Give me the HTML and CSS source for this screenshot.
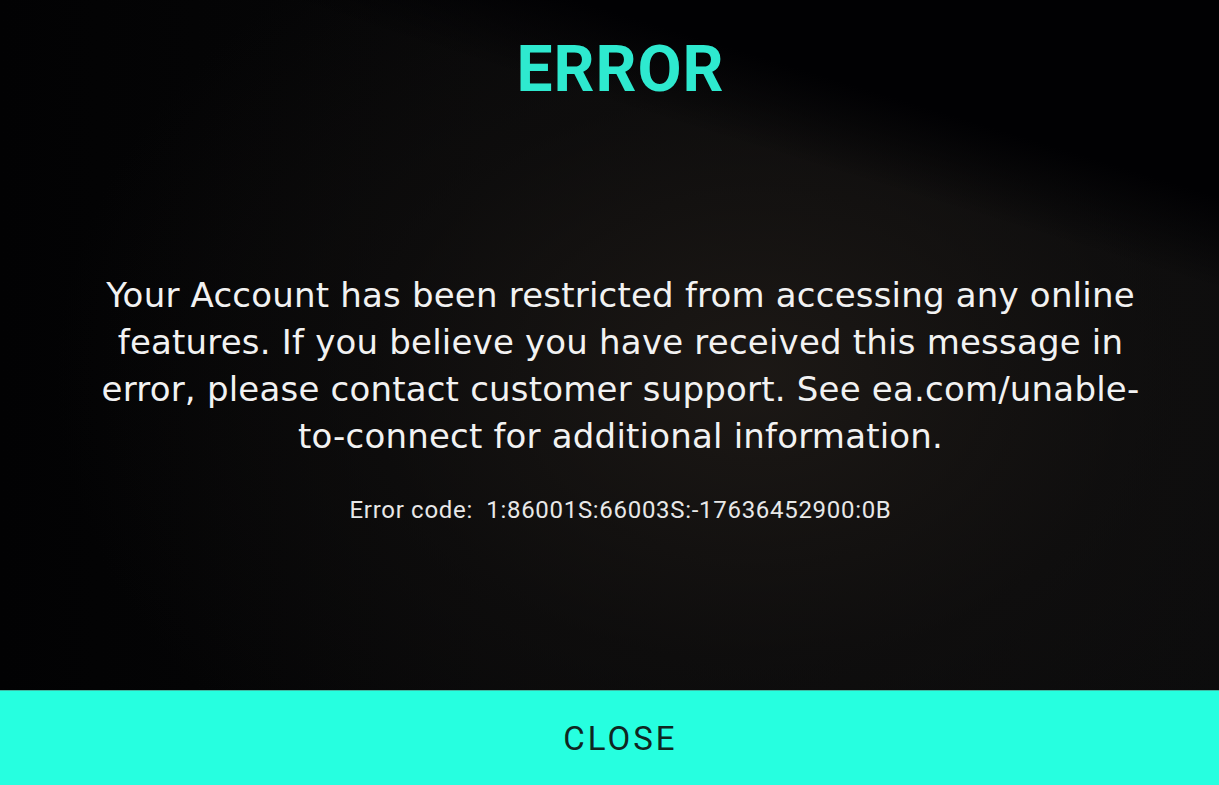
FILE: index.html
```html
<!DOCTYPE html>
<html lang="en">
<head>
    <meta charset="UTF-8">
    <meta name="viewport" content="width=device-width, initial-scale=1.0">
    <title>Error</title>
    <link rel="stylesheet" href="styles.css">
</head>
<body>
    <div class="screen">
        <div class="dialog">
            <h1 class="dialog-title">ERROR</h1>
            <p class="dialog-message">
                Your Account has been restricted from accessing any online<br>
                features. If you believe you have received this message in<br>
                error, please contact customer support. See ea.com/unable-<br>
                to-connect for additional information.
            </p>
            <div class="error-code">Error code:&nbsp; 1:86001S:66003S:-17636452900:0B</div>
        </div>

        <button class="close-button">CLOSE</button>
    </div>
</body>
</html>
```

FILE: styles.css
```css
html, body {
    height: 100%;
}

body {
    margin: 0;
    background-color: #040506;
    font-family: "DejaVu Sans", "Open Sans", sans-serif;
    color: #f2f2f2;
    overflow: hidden;
}

.screen {
    height: 100vh;
    display: flex;
    flex-direction: column;
    background:
        linear-gradient(197deg, #010103 0%, #010103 17%, rgba(1, 1, 3, 0) 25%),
        radial-gradient(ellipse 700px 520px at 62% 48%, rgba(29, 25, 22, 0.95), rgba(20, 18, 17, 0.5) 55%, rgba(4, 5, 6, 0) 100%),
        linear-gradient(90deg, #020203 0%, #070708 40%, #0b0b0c 100%);
}

.dialog {
    flex: 1;
    display: flex;
    flex-direction: column;
    align-items: center;
    padding-top: 38px;
    padding-left: 22px;
}

.dialog-title {
    margin: 0;
    font-family: "Roboto", "DejaVu Sans", sans-serif;
    font-weight: 700;
    font-size: 64px;
    line-height: 64px;
    letter-spacing: 1px;
    color: #2ee9cf;
}

.dialog-message {
    margin: 170px 0 0;
    text-align: center;
    white-space: nowrap;
    font-size: 34px;
    line-height: 47px;
    letter-spacing: 0.2px;
}

.error-code {
    margin-top: 38px;
    font-family: "Roboto", sans-serif;
    font-size: 24px;
    line-height: 24px;
    letter-spacing: 0.7px;
    color: #e8e8e8;
}

.close-button {
    height: 95px;
    flex-shrink: 0;
    padding: 0 0 0 22px;
    border: none;
    border-top: 1px solid #3fb9a4;
    background-color: #26ffe0;
    color: #0f2622;
    font-family: "Roboto", "DejaVu Sans", sans-serif;
    font-size: 33px;
    font-weight: 400;
    letter-spacing: 3px;
    cursor: pointer;
}
```
